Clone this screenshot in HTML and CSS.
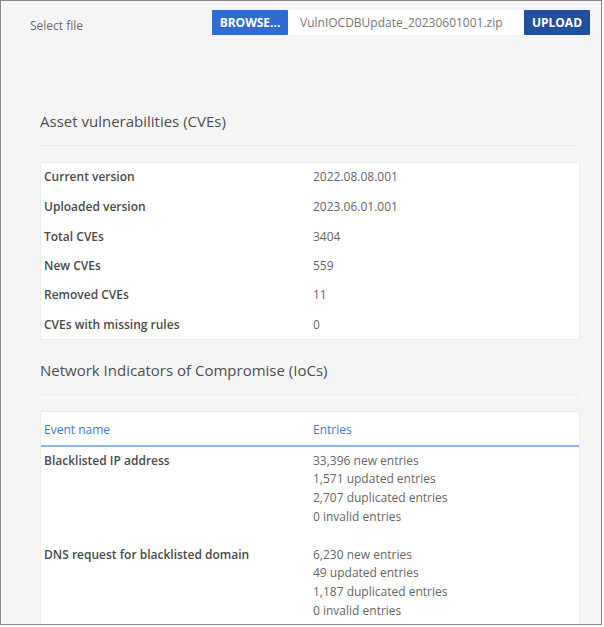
FILE: index.html
```html
<!DOCTYPE html>
<html>
<head>
<meta charset="utf-8">
<link rel="stylesheet" href="styles.css">
</head>
<body>
<div class="frame">
  <div class="file-row">
    <span class="file-label">Select file</span>
    <div class="file-controls">
      <button class="btn btn-browse">BROWSE...</button>
      <div class="file-name">VulnIOCDBUpdate_20230601001.zip</div>
      <button class="btn btn-upload">UPLOAD</button>
    </div>
  </div>

  <section class="section section-cves">
    <h2 class="section-title">Asset vulnerabilities (CVEs)</h2>
    <div class="card">
      <div class="kv-row"><span class="kv-label">Current version</span><span class="kv-value">2022.08.08.001</span></div>
      <div class="kv-row"><span class="kv-label">Uploaded version</span><span class="kv-value">2023.06.01.001</span></div>
      <div class="kv-row"><span class="kv-label">Total CVEs</span><span class="kv-value">3404</span></div>
      <div class="kv-row"><span class="kv-label">New CVEs</span><span class="kv-value">559</span></div>
      <div class="kv-row"><span class="kv-label">Removed CVEs</span><span class="kv-value">11</span></div>
      <div class="kv-row"><span class="kv-label">CVEs with missing rules</span><span class="kv-value">0</span></div>
    </div>
  </section>

  <section class="section section-iocs">
    <h2 class="section-title">Network Indicators of Compromise (IoCs)</h2>
    <div class="card card-table">
      <div class="table-head">
        <span>Event name</span>
        <span>Entries</span>
      </div>
      <div class="table-row">
        <span class="kv-label">Blacklisted IP address</span>
        <div class="entries">
          <span>33,396 new entries</span>
          <span>1,571 updated entries</span>
          <span>2,707 duplicated entries</span>
          <span>0 invalid entries</span>
        </div>
      </div>
      <div class="table-row">
        <span class="kv-label">DNS request for blacklisted domain</span>
        <div class="entries">
          <span>6,230 new entries</span>
          <span>49 updated entries</span>
          <span>1,187 duplicated entries</span>
          <span>0 invalid entries</span>
        </div>
      </div>
    </div>
  </section>
</div>
</body>
</html>
```

FILE: styles.css
```css
* { box-sizing: border-box; }

html, body {
  margin: 0;
  padding: 0;
  background: #ffffff;
}

body {
  font-family: "Open Sans", "Noto Sans", sans-serif;
  font-size: 12px;
  color: #555;
}

.frame {
  width: 602px;
  height: 625px;
  border: 1px solid #888;
  background: #f5f5f5;
  overflow: hidden;
}

.file-row {
  display: flex;
  align-items: center;
  padding: 9px 0 0 29px;
}

.file-label {
  color: #6a6a6a;
  font-size: 12px;
  width: 182px;
  padding-top: 5px;
}

.file-controls {
  display: flex;
  height: 25px;
}

.btn {
  border: none;
  font-family: inherit;
  font-size: 12px;
  font-weight: 700;
  color: #fff;
  padding: 0;
  height: 25px;
  border-radius: 1px;
}

.btn-browse {
  width: 76px;
  background: #2f6bd2;
}

.file-name {
  width: 236px;
  background: #fff;
  color: #777;
  line-height: 25px;
  padding-left: 12px;
}

.btn-upload {
  width: 66px;
  background: #224f9e;
}

.section {
  margin: 0 21px 0 39px;
}

.section-cves {
  padding-top: 76px;
}

.section-iocs {
  padding-top: 20px;
}

.section-title {
  margin: 0;
  font-size: 15px;
  font-weight: 400;
  color: #4f4f4f;
  line-height: 20px;
  padding-bottom: 14px;
  border-bottom: 1px solid #ebebeb;
}

.section-cves .section-title {
  margin-bottom: 16px;
}

.section-iocs .section-title {
  margin-bottom: 16px;
}

.card {
  background: #fff;
  border: 1px solid #ececec;
}

.kv-row {
  display: grid;
  grid-template-columns: 269px 1fr;
  height: 29.3px;
  align-items: center;
  padding-left: 3px;
}

.kv-row:first-child {
  padding-bottom: 2px;
}

.kv-label {
  font-weight: 600;
  color: #4a4a4a;
}

.kv-value {
  color: #666;
}

.table-head {
  display: grid;
  grid-template-columns: 269px 1fr;
  padding: 9px 0 6px 3px;
  line-height: 18px;
  color: #3b78d8;
  border-bottom: 2px solid #8fb2ea;
}

.table-row {
  display: grid;
  grid-template-columns: 269px 1fr;
  padding: 5px 0 14px 3px;
  line-height: 18.7px;
}

.entries {
  display: flex;
  flex-direction: column;
  color: #666;
}
```
